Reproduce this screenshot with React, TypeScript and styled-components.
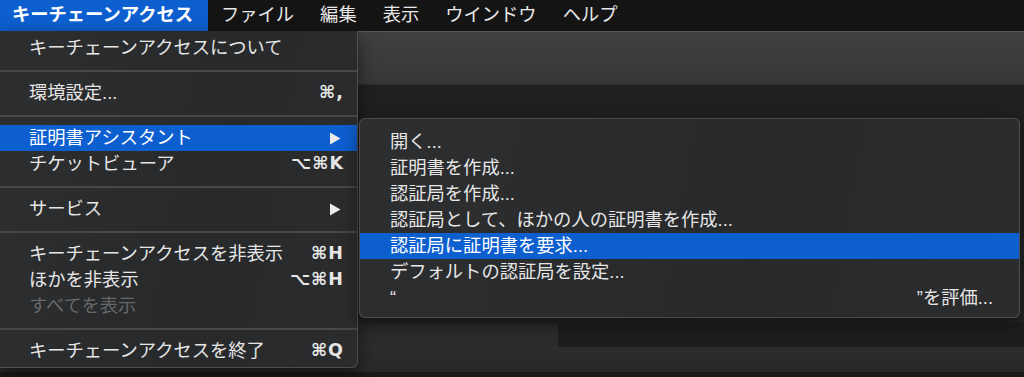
import React from "react";
import styled, { createGlobalStyle, css } from "styled-components";

const GlobalStyle = createGlobalStyle`
  html, body {
    margin: 0;
    padding: 0;
    background: #1c1d1f;
    overflow: hidden;
  }
  * { box-sizing: border-box; }
`;

const FONT = `"Liberation Sans", "DejaVu Sans", "Noto Sans CJK JP", sans-serif`;

const Screen = styled.div`
  position: relative;
  width: 1024px;
  height: 377px;
  overflow: hidden;
  font-family: ${FONT};
  font-size: 18.3px;
  color: #e4e4e4;
  display: flex;
  flex-direction: column;
  background: #1c1d1f;
`;

const MenuBar = styled.div`
  height: 31px;
  flex: none;
  display: flex;
  align-items: stretch;
  background: #141414;
`;

const BarItem = styled.div<{ $active?: boolean }>`
  display: flex;
  align-items: center;
  padding: 0 13px;
  color: #e8e8e8;
  line-height: 1;
  ${(p) =>
    p.$active &&
    css`
      background: #0d5fd0;
      color: #ffffff;
      font-weight: 700;
      padding: 0 15px 0 12px;
    `}
`;

const Desktop = styled.div`
  flex: 1;
  display: flex;
  flex-direction: column;
`;

const Toolbar = styled.div`
  height: 54px;
  flex: none;
  border-top: 1px solid #55585a;
  background: linear-gradient(#3e4042, #353739);
  border-bottom: 1px solid #2a2b2d;
`;

const WindowBody = styled.div`
  flex: 1;
  display: flex;
  flex-direction: column;
  background: #1f2123;
`;

const BodyTop = styled.div`
  flex: 1;
  background: linear-gradient(#1e2022, #232527);
`;

const BodyStrip = styled.div`
  height: 24px;
  flex: none;
  display: flex;
`;

const StripPane = styled.div<{ $light?: boolean }>`
  background: ${(p) => (p.$light ? "#2a2c2e" : "#1c1e20")};
  width: ${(p) => (p.$light ? "558px" : "auto")};
  flex: ${(p) => (p.$light ? "none" : "1")};
`;

const BodyFooter = styled.div`
  height: 25px;
  flex: none;
  background: linear-gradient(#2b2d2f, #26282a);
`;

const BodyEdge = styled.div`
  height: 5px;
  flex: none;
  background: #18191a;
`;

const Menu = styled.div<{ $sub?: boolean }>`
  position: absolute;
  display: flex;
  flex-direction: column;
  background: linear-gradient(100deg, #2d2e30, #27292b 60%, #2b2c2e);
  border: 1px solid rgba(255, 255, 255, 0.16);
  box-shadow: 0 6px 18px rgba(0, 0, 0, 0.5);
  ${(p) =>
    p.$sub
      ? css`
          left: 359px;
          top: 118px;
          width: 661px;
          height: 200px;
          border-radius: 6px;
          padding: 10px 0 8px;
        `
      : css`
          left: 0;
          top: 31px;
          width: 358px;
          height: 337px;
          border-top: none;
          border-left: none;
          border-radius: 0 0 6px 0;
          padding: 4px 0;
        `}
`;

const Row = styled.div<{ $hl?: boolean; $disabled?: boolean; $sub?: boolean }>`
  height: 26px;
  flex: none;
  display: flex;
  align-items: center;
  justify-content: space-between;
  padding: ${(p) => (p.$sub ? "0 26px 0 30px" : "0 13px 0 29px")};
  white-space: nowrap;
  color: ${(p) => (p.$disabled ? "#666769" : "#e6e6e6")};
  background: ${(p) => (p.$hl ? "#0d5fd0" : "transparent")};
  ${(p) => p.$hl && css`color: #ffffff;`}
`;

const Label = styled.span`
  line-height: 1;
  padding-top: 1px;
`;

const Shortcut = styled.span`
  line-height: 1;
  font-family: "DejaVu Sans", "Liberation Sans", sans-serif;
  font-size: 17.5px;
  font-weight: 700;
  letter-spacing: 1px;
  color: #e6e6e6;
`;

const Separator = styled.div`
  height: 19px;
  flex: none;
  display: flex;
  align-items: center;
  &::after {
    content: "";
    display: block;
    width: 100%;
    height: 2px;
    background: #47484a;
  }
`;

const Arrow = () => (
  <svg width="12" height="13" viewBox="0 0 12 13" style={{ marginRight: 3 }}>
    <path d="M1 0.5 L11.5 6.5 L1 12.5 Z" fill="#ececec" />
  </svg>
);

type Entry =
  | { sep: true }
  | {
      sep?: false;
      label: string;
      shortcut?: string;
      arrow?: boolean;
      hl?: boolean;
      disabled?: boolean;
    };

const mainItems: Entry[] = [
  { label: "キーチェーンアクセスについて" },
  { sep: true },
  { label: "環境設定...", shortcut: "⌘," },
  { sep: true },
  { label: "証明書アシスタント", arrow: true, hl: true },
  { label: "チケットビューア", shortcut: "⌥⌘K" },
  { sep: true },
  { label: "サービス", arrow: true },
  { sep: true },
  { label: "キーチェーンアクセスを非表示", shortcut: "⌘H" },
  { label: "ほかを非表示", shortcut: "⌥⌘H" },
  { label: "すべてを表示", disabled: true },
  { sep: true },
  { label: "キーチェーンアクセスを終了", shortcut: "⌘Q" },
];

const subItems: { label: string; right?: string; hl?: boolean }[] = [
  { label: "開く..." },
  { label: "証明書を作成..." },
  { label: "認証局を作成..." },
  { label: "認証局として、ほかの人の証明書を作成..." },
  { label: "認証局に証明書を要求...", hl: true },
  { label: "デフォルトの認証局を設定..." },
  { label: "“", right: "”を評価..." },
];

const barItems = ["ファイル", "編集", "表示", "ウインドウ", "ヘルプ"];

export default function App() {
  return (
    <>
      <GlobalStyle />
      <Screen>
        <MenuBar>
          <BarItem $active>キーチェーンアクセス</BarItem>
          {barItems.map((b) => (
            <BarItem key={b}>{b}</BarItem>
          ))}
        </MenuBar>
        <Desktop>
          <Toolbar />
          <WindowBody>
            <BodyTop />
            <BodyStrip>
              <StripPane $light />
              <StripPane />
            </BodyStrip>
            <BodyFooter />
            <BodyEdge />
          </WindowBody>
        </Desktop>

        <Menu>
          {mainItems.map((it, i) =>
            it.sep ? (
              <Separator key={i} />
            ) : (
              <Row key={i} $hl={it.hl} $disabled={it.disabled}>
                <Label>{it.label}</Label>
                {it.shortcut && <Shortcut>{it.shortcut}</Shortcut>}
                {it.arrow && <Arrow />}
              </Row>
            )
          )}
        </Menu>

        <Menu $sub>
          {subItems.map((it, i) => (
            <Row key={i} $sub $hl={it.hl}>
              <Label>{it.label}</Label>
              {it.right && <Label>{it.right}</Label>}
            </Row>
          ))}
        </Menu>
      </Screen>
    </>
  );
}
